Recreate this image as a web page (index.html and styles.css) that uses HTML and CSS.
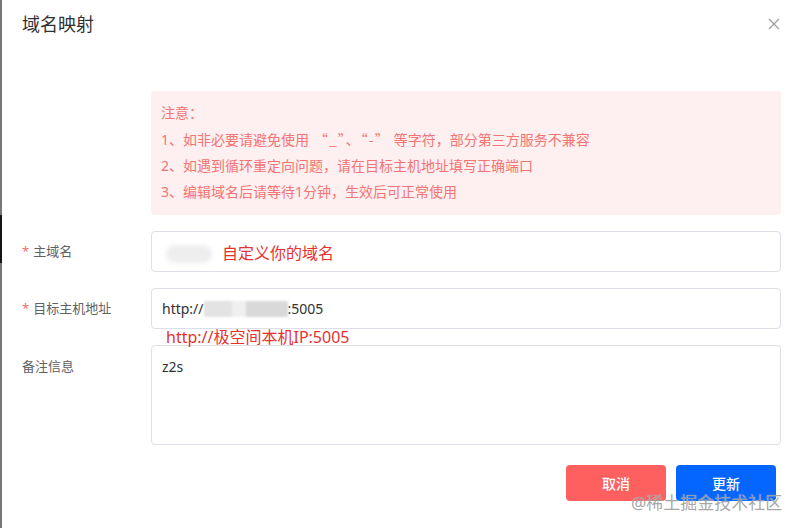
FILE: index.html
```html
<!DOCTYPE html>
<html lang="zh-CN">
<head>
<meta charset="utf-8">
<title>域名映射</title>
<link rel="stylesheet" href="styles.css">
</head>
<body>
<div class="edge"><span class="edge-dark"></span></div>
<div class="dialog">
  <div class="header">
    <div class="title">域名映射</div>
    <svg class="close" width="12" height="12" viewBox="0 0 12 12"><path d="M1 1 L11 11 M11 1 L1 11" stroke="#9a9ca3" stroke-width="1.2" fill="none"/></svg>
  </div>
  <div class="form">
    <div class="label"></div>
    <div class="alert">
      <div>注意：</div>
      <div>1、如非必要请避免使用<span class="cjk">“_”、“-”</span>等字符，部分第三方服务不兼容</div>
      <div>2、如遇到循环重定向问题，请在目标主机地址填写正确端口</div>
      <div>3、编辑域名后请等待1分钟，生效后可正常使用</div>
    </div>

    <div class="label"><span class="req">*</span>主域名</div>
    <div class="input"><span class="blob"></span><span class="note">自定义你的域名</span></div>

    <div class="label"><span class="req">*</span>目标主机地址</div>
    <div class="input host">http://<span class="mask"><i class="m1"></i><i class="m2"></i><i class="m3"></i></span>:5005<span class="note2">http://极空间本机IP:5005</span></div>

    <div class="label top">备注信息</div>
    <div class="textarea">z2s</div>
  </div>
  <div class="footer">
    <button class="btn cancel">取消</button>
    <button class="btn primary">更新</button>
  </div>
</div>
<div class="watermark">@稀土掘金技术社区</div>
</body>
</html>
```
FILE: styles.css
```css
html, body {
  margin: 0;
  padding: 0;
}
body {
  width: 800px;
  height: 528px;
  overflow: hidden;
  position: relative;
  background: #fff;
  font-family: "Noto Sans", "Noto Sans CJK SC", sans-serif;
  color: #606266;
}
.edge {
  position: absolute;
  left: 0;
  top: 0;
  width: 2px;
  height: 528px;
  background: #767676;
}
.edge-dark {
  position: absolute;
  left: 0;
  top: 215px;
  width: 2px;
  height: 48px;
  background: #151515;
}
.dialog {
  padding: 0 19px 0 22px;
}
.header {
  height: 48px;
  display: flex;
  align-items: center;
  justify-content: space-between;
}
.title {
  font-size: 18px;
  color: #303133;
  line-height: 24px;
}
.close {
  margin-right: 1px;
}
.form {
  margin-top: 43px;
  display: grid;
  grid-template-columns: 129px 1fr;
  row-gap: 16px;
}
.label {
  font-size: 13px;
  line-height: 41px;
  color: #606266;
  white-space: nowrap;
}
.label.top {
  align-self: start;
  line-height: 42px;
}
.req {
  color: #f56c6c;
  margin-right: 4px;
}
.alert {
  background: #fef0f0;
  border-radius: 4px;
  padding: 9px 10px 10px;
  font-size: 14px;
  line-height: 26px;
  color: #f37474;
}
.cjk {
  font-family: "Noto Sans CJK SC", sans-serif;
  padding: 0 4px 0 5px;
  letter-spacing: 1px;
}
.input {
  height: 41px;
  box-sizing: border-box;
  border: 1px solid #dcdfe6;
  border-radius: 4px;
  padding: 0 10px;
  display: flex;
  align-items: center;
  font-size: 14px;
  color: #303133;
  position: relative;
}
.blob {
  width: 46px;
  height: 18px;
  margin-left: 4px;
  margin-top: 4px;
  border-radius: 9px;
  background: #eeeeee;
  filter: blur(2px);
}
.note {
  margin-left: 10px;
  font-size: 16px;
  color: #e5322f;
}
.mask {
  display: flex;
  width: 84px;
  height: 16px;
  filter: blur(1px);
}
.mask i {
  display: block;
  height: 16px;
}
.m1 { width: 28px; background: #e3e3e3; }
.m2 { width: 14px; background: #f0f0f0; }
.m3 { width: 42px; background: #d9d9d9; }
.note2 {
  position: absolute;
  left: 14px;
  top: 38px;
  font-size: 16px;
  line-height: 20px;
  color: #e5322f;
  white-space: nowrap;
}
.textarea {
  height: 100px;
  box-sizing: border-box;
  border: 1px solid #dcdfe6;
  border-radius: 4px;
  padding: 11px 10px;
  font-size: 14px;
  line-height: 20px;
  color: #303133;
}
.footer {
  margin-top: 20px;
  display: flex;
  justify-content: flex-end;
  gap: 10px;
  padding-right: 5px;
}
.btn {
  width: 100px;
  height: 36px;
  border: none;
  border-radius: 4px;
  color: #fff;
  font-family: "Noto Sans CJK SC", sans-serif;
  font-size: 14px;
  font-weight: 500;
}
.cancel {
  background: #fe5f5f;
}
.primary {
  background: #0566ff;
}
.watermark {
  position: absolute;
  left: 631px;
  top: 491px;
  font-size: 17px;
  line-height: 24px;
  color: rgba(150, 150, 150, 0.85);
  text-shadow: 0 0 1px rgba(255, 255, 255, 0.6);
  white-space: nowrap;
}
```
